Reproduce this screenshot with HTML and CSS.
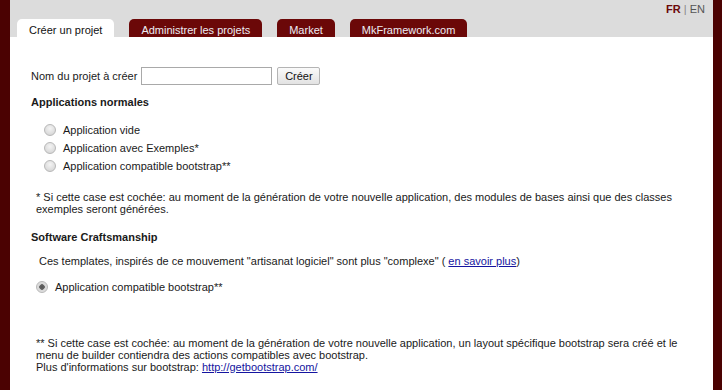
FILE: index.html
```html
<!DOCTYPE html>
<html lang="fr">
<head>
    <meta charset="UTF-8">
    <title>Builder</title>
    <link rel="stylesheet" href="styles.css">
</head>
<body>
    <div class="page">
        <div class="bord"></div>
        <div class="main">
            <div class="entete">
                <ul class="onglets">
                    <li class="actif"><a href="#">Créer un projet</a></li>
                    <li><a href="#">Administrer les projets</a></li>
                    <li><a href="#">Market</a></li>
                    <li><a href="#">MkFramework.com</a></li>
                </ul>
                <div class="langues"><a href="#" class="sel">FR</a> | <a href="#">EN</a></div>
            </div>
            <div class="contenu">
                <form class="creation">
                    <label>Nom du projet à créer</label>
                    <input type="text" class="champ">
                    <input type="submit" value="Créer" class="bouton">
                </form>

                <h2>Applications normales</h2>
                <ul class="choix">
                    <li><input type="radio" name="app"> <span>Application vide</span></li>
                    <li><input type="radio" name="app"> <span>Application avec Exemples*</span></li>
                    <li><input type="radio" name="app"> <span>Application compatible bootstrap**</span></li>
                </ul>
                <p class="note">* Si cette case est cochée: au moment de la génération de votre nouvelle application, des modules de bases ainsi que des classes exemples seront générées.</p>

                <h2 class="craft">Software Craftsmanship</h2>
                <p class="intro">Ces templates, inspirés de ce mouvement "artisanat logiciel" sont plus "complexe" ( <a href="#">en savoir plus</a>)</p>
                <div class="choix-sc"><input type="radio" name="app" checked> <span>Application compatible bootstrap**</span></div>

                <p class="note note-bas">** Si cette case est cochée: au moment de la génération de votre nouvelle application, un layout spécifique bootstrap sera créé et le menu de builder contiendra des actions compatibles avec bootstrap.<br>Plus d'informations sur bootstrap: <a href="#">http://getbootstrap.com/</a></p>
            </div>
        </div>
        <div class="bord bord-droit"></div>
    </div>
</body>
</html>
```

FILE: styles.css
```css
* {
    margin: 0;
    padding: 0;
    box-sizing: border-box;
}
body {
    font-family: "Liberation Sans", Arial, sans-serif;
    font-size: 11px;
    color: #1a1a1a;
    background-color: #fff;
}
.page {
    display: flex;
    height: 390px;
}
.bord {
    width: 10px;
    background-color: #4b0202;
}
.bord-droit {
    width: 9px;
}
.main {
    flex: 1;
    display: flex;
    flex-direction: column;
}
.entete {
    background-color: #dcdcdc;
    height: 37px;
    display: flex;
    justify-content: space-between;
    padding-left: 7px;
}
.onglets {
    list-style: none;
    display: flex;
    align-items: flex-end;
    gap: 15px;
}
.onglets li {
    height: 18px;
    border-radius: 5px 5px 0 0;
    background-color: #6b0808;
}
.onglets li a {
    display: block;
    line-height: 23px;
    padding: 0 12px;
    color: #ececf4;
    text-decoration: none;
}
.onglets li.actif {
    background-color: #fff;
}
.onglets li.actif a {
    color: #111;
}
.langues {
    padding: 3px 8px 0 0;
    color: #888;
}
.langues a {
    color: #555;
    text-decoration: none;
}
.langues a.sel {
    color: #6b0808;
    font-weight: bold;
}
.contenu {
    flex: 1;
    padding: 30px 21px 0;
}
.creation {
    display: flex;
    align-items: center;
    gap: 4px;
}
.champ {
    width: 131px;
    height: 18px;
    border: 1px solid #a9a9a9;
}
.bouton {
    font-family: "Liberation Sans", Arial, sans-serif;
    font-size: 11px;
    height: 18px;
    width: 43px;
    margin-left: 1px;
    border: 1px solid #b4b4b4;
    border-radius: 2px;
    background: linear-gradient(#fafafa, #e2e2e2);
    color: #111;
}
h2 {
    font-size: 11px;
    margin-top: 11px;
}
h2.craft {
    margin-top: 16px;
}
.choix {
    list-style: none;
    margin: 13px 0 0 13px;
}
.choix li, .choix-sc {
    display: flex;
    align-items: center;
    height: 18px;
}
.choix input, .choix-sc input {
    appearance: none;
    width: 12px;
    height: 12px;
    margin: 0 7px 0 0;
    border: 1px solid #b8b8b8;
    border-radius: 50%;
    background: radial-gradient(circle at 50% 35%, #f4f4f4, #d0d0d0);
}
.choix-sc input:checked {
    background: radial-gradient(circle, #555 0, #666 2.5px, #d6d6d6 3px, #e8e8e8);
}
.note {
    margin: 16px 0 0 5px;
}
.intro {
    margin: 12px 0 0 8px;
}
.intro a, .note a {
    color: #1515a0;
}
.choix-sc {
    margin: 11px 0 0 5px;
}
.note-bas {
    margin-top: 41px;
}
```
